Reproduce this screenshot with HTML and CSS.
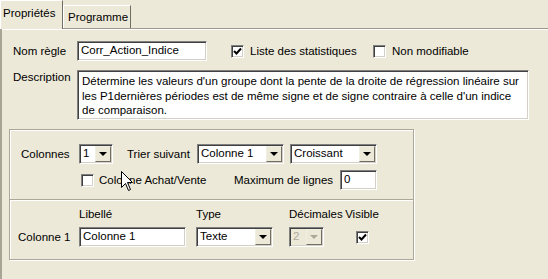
FILE: index.html
```
<!DOCTYPE html>
<html lang="fr">
<head>
  <meta charset="UTF-8">
  <title>Propriétés de la règle</title>
  <link rel="stylesheet" href="styles.css">
</head>
<body>

  <div class="tabs">
    <div class="tab tab-active">Propriétés</div>
    <div class="tab">Programme</div>
  </div>

  <div class="panel">
    <div class="row row-name">
      <span class="lbl lbl-main">Nom règle</span>
      <div class="field field-name">Corr_Action_Indice</div>
      <div class="opt opt-stats">
        <span class="check checked"><svg width="9" height="9" viewBox="0 0 9 9"><path d="M1 4 L3.5 6.5 L8 1.5" fill="none" stroke="#000" stroke-width="2"/></svg></span>
        <span>Liste des statistiques</span>
      </div>
      <div class="opt">
        <span class="check"></span>
        <span>Non modifiable</span>
      </div>
    </div>

    <div class="row row-desc">
      <span class="lbl lbl-main">Description</span>
      <div class="field field-desc">Détermine les valeurs d'un groupe dont la pente de la droite de régression linéaire sur<br>les P1dernières périodes est de même signe et de signe contraire à celle d'un indice<br>de comparaison.</div>
    </div>

    <div class="group">
      <div class="grow grow-cols">
        <span class="lbl lbl-cols">Colonnes</span>
        <div class="select w-34"><span class="select-value">1</span><span class="select-btn"></span></div>
        <span class="lbl lbl-sort">Trier suivant</span>
        <div class="select w-87"><span class="select-value">Colonne 1</span><span class="select-btn"></span></div>
        <div class="select w-87 ml-6"><span class="select-value">Croissant</span><span class="select-btn"></span></div>
      </div>

      <div class="grow grow-opts">
        <div class="opt opt-achat">
          <span class="check"></span>
          <span>Colonne Achat/Vente</span>
        </div>
        <span class="lbl lbl-max">Maximum de lignes</span>
        <div class="field field-max">0</div>
      </div>

      <div class="sep"></div>

      <div class="colgrid">
        <span></span>
        <span class="head">Libellé</span>
        <span class="head">Type</span>
        <span class="head">Décimales</span>
        <span class="head head-center">Visible</span>

        <span class="cell">Colonne 1</span>
        <div class="cell"><div class="field field-libelle">Colonne 1</div></div>
        <div class="cell"><div class="select w-77"><span class="select-value">Texte</span><span class="select-btn"></span></div></div>
        <div class="cell"><div class="select w-35 disabled"><span class="select-value">2</span><span class="select-btn"></span></div></div>
        <div class="cell cell-center">
          <span class="check checked"><svg width="9" height="9" viewBox="0 0 9 9"><path d="M1 4 L3.5 6.5 L8 1.5" fill="none" stroke="#000" stroke-width="2"/></svg></span>
        </div>
      </div>
    </div>
  </div>

  <!-- pointeur de la souris -->
  <svg class="cursor" width="13" height="21" viewBox="0 0 13 21">
    <path d="M0.5 0.5 L0.5 16.5 L4.5 12.5 L7.5 19.5 L9.5 18.5 L6.5 11.5 L11.5 11.5 Z" fill="#fff" stroke="#000" stroke-width="1"/>
  </svg>

</body>
</html>
```
FILE: styles.css
```
body {
  margin: 0;
  background: #ece9d8;
  font-family: "Liberation Sans", Arial, sans-serif;
  font-size: 11.5px;
  color: #000;
  position: relative;
  height: 279px;
  overflow: hidden;
}

.tabs {
  display: flex;
  align-items: flex-end;
  height: 28px;
}

.tab {
  height: 23px;
  padding: 0 4px;
  line-height: 22px;
  border-top: 1px solid #fff;
  border-left: 1px solid #fff;
  border-right: 1px solid #716f64;
  box-sizing: border-box;
  width: 68px;
}

.tab-active {
  position: relative;
  z-index: 1;
  height: 29px;
  margin-bottom: -1px;
  width: 63px;
  padding: 0 2px;
  line-height: 24px;
  background: #ece9d8;
  border-left: 1px solid #fff;
  border-right: 1px solid #716f64;
}

.panel {
  border-top: 1px solid #9d9a8c;
  border-left: 2px solid #a7a596;
  box-shadow: inset 0 1px 0 #fff;
  padding: 12px 0 0 7px;
  height: 260px;
  box-sizing: border-box;
}

.row {
  display: flex;
  padding-left: 4px;
}

.row-name {
  align-items: center;
  height: 20px;
}

.row-desc {
  margin-top: 9px;
}

.lbl-main {
  width: 64px;
  flex: none;
}

.row-desc .lbl-main {
  padding-top: 1px;
}

.field {
  background: #fff;
  border: 1px solid;
  border-color: #808080 #fff #fff #808080;
  box-shadow: inset 1px 1px 0 #404040, inset -1px -1px 0 #d4d0c8;
  box-sizing: border-box;
  padding: 2px 3px 0 3px;
  white-space: nowrap;
  overflow: hidden;
}

.field-name {
  width: 130px;
  height: 20px;
}

.field-desc {
  width: 452px;
  height: 50px;
  padding: 3px 3px 0 4px;
  line-height: 14.5px;
}

.field-max {
  width: 37px;
  height: 20px;
}

.field-libelle {
  width: 107px;
  height: 20px;
}

.opt {
  display: flex;
  align-items: center;
  gap: 6px;
}

.opt-stats {
  width: 142px;
  margin-left: 24px;
}

.check {
  width: 13px;
  height: 13px;
  flex: none;
  box-sizing: border-box;
  background: #fff;
  border: 1px solid;
  border-color: #808080 #fff #fff #808080;
  box-shadow: inset 1px 1px 0 #404040, inset -1px -1px 0 #d4d0c8;
  display: flex;
  align-items: center;
  justify-content: center;
}

.group {
  margin-top: 9px;
  width: 405px;
  height: 131px;
  box-sizing: border-box;
  border: 1px solid #aca899;
  box-shadow: inset 1px 1px 0 #fff, 1px 1px 0 #fff;
  padding-top: 14px;
}

.grow {
  display: flex;
  align-items: center;
  padding-left: 11px;
  height: 20px;
}

.grow-opts {
  margin-top: 6px;
}

.lbl-cols {
  width: 58px;
}

.lbl-sort {
  margin-left: 14px;
  width: 70px;
}

.ml-6 {
  margin-left: 6px;
}

.opt-achat {
  margin-left: 60px;
  width: 153px;
  gap: 5px;
}

.lbl-max {
  width: 106px;
}

.select {
  display: flex;
  height: 20px;
  box-sizing: border-box;
  background: #fff;
  border: 1px solid;
  border-color: #808080 #fff #fff #808080;
  box-shadow: inset 1px 1px 0 #404040, inset -1px -1px 0 #d4d0c8;
  padding: 1px;
}

.select-value {
  flex: 1;
  padding: 1px 0 0 2px;
  white-space: nowrap;
  overflow: hidden;
}

.select-btn {
  width: 16px;
  flex: none;
  box-sizing: border-box;
  background: #ece9d8;
  border: 1px solid;
  border-color: #f1efe2 #716f64 #716f64 #f1efe2;
  display: flex;
  align-items: center;
  justify-content: center;
}

.select-btn::after {
  content: "";
  border-left: 4px solid transparent;
  border-right: 4px solid transparent;
  border-top: 4px solid #000;
}

.select.disabled {
  background: #ece9d8;
  color: #aca899;
}

.select.disabled .select-btn::after {
  border-top-color: #aca899;
}

.w-34 { width: 34px; }
.w-35 { width: 35px; }
.w-77 { width: 77px; }
.w-87 { width: 87px; }

.sep {
  margin-top: 9px;
  border-top: 1px solid #aca899;
  border-bottom: 1px solid #fff;
}

.colgrid {
  display: grid;
  grid-template-columns: 61px 117px 93px 55px 36px;
  grid-template-rows: 15px 22px;
  row-gap: 4px;
  padding-left: 8px;
  margin-top: 6px;
}

.head {
  line-height: 15px;
}

.head-center,
.cell-center {
  justify-self: center;
}

.cell {
  display: flex;
  align-items: center;
}

.cursor {
  position: absolute;
  left: 121px;
  top: 171px;
}
```
